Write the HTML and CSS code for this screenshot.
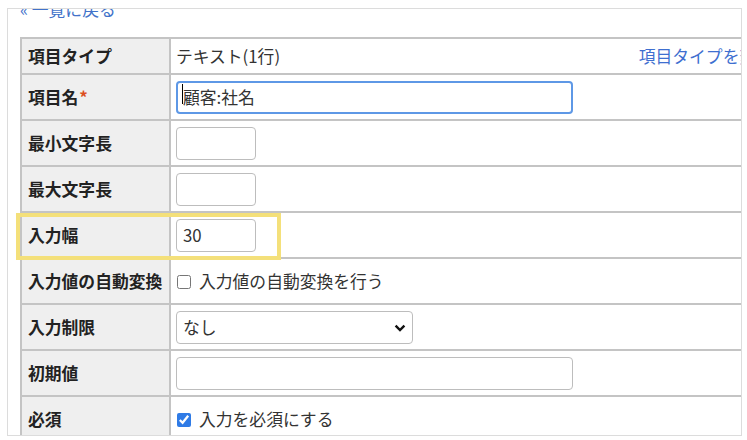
FILE: index.html
```html
<!DOCTYPE html>
<html lang="ja">
<head>
<meta charset="utf-8">
<title>項目編集</title>
<link rel="stylesheet" href="styles.css">
</head>
<body>
<div class="panel">
  <div class="content">
    <a class="back" href="#">« 一覧に戻る</a>
    <table class="form">
      <colgroup><col class="c-label"><col class="c-value"></colgroup>
      <tr class="row-first">
        <th>項目タイプ</th>
        <td><div class="type-line"><span>テキスト(1行)</span><a class="change" href="#">項目タイプを変更</a></div></td>
      </tr>
      <tr>
        <th>項目名<span class="req">*</span></th>
        <td><span class="field"><input class="inp wide focused" type="text" value="顧客:社名"><span class="caret"></span></span></td>
      </tr>
      <tr>
        <th>最小文字長</th>
        <td><input class="inp short" type="text" value=""></td>
      </tr>
      <tr>
        <th>最大文字長</th>
        <td><input class="inp short" type="text" value=""></td>
      </tr>
      <tr>
        <th>入力幅</th>
        <td><input class="inp short" type="text" value="30"></td>
      </tr>
      <tr>
        <th>入力値の自動変換</th>
        <td><label class="check"><input type="checkbox">入力値の自動変換を行う</label></td>
      </tr>
      <tr>
        <th>入力制限</th>
        <td>
          <span class="select-wrap">
            <select class="inp sel"><option>なし</option></select>
            <svg class="chev" width="12" height="8" viewBox="0 0 12 8"><path d="M1.6 1.6 L6 6 L10.4 1.6" fill="none" stroke="#111" stroke-width="2.4"/></svg>
          </span>
        </td>
      </tr>
      <tr>
        <th>初期値</th>
        <td><input class="inp wide" type="text" value=""></td>
      </tr>
      <tr>
        <th>必須</th>
        <td><label class="check"><input type="checkbox" checked>入力を必須にする</label></td>
      </tr>
    </table>
  </div>
  <div class="highlight"></div>
</div>
</body>
</html>
```

FILE: styles.css
```css
html, body {
  margin: 0;
  padding: 0;
  background: #fff;
}

body {
  padding: 8px 0 0 7px;
  font-family: "Noto Sans CJK JP", "Noto Sans", sans-serif;
  font-size: 16.8px;
  color: #333;
}

.panel {
  position: relative;
  width: 735px;
  height: 428px;
  box-sizing: border-box;
  border: 1px solid #dcdcdc;
  overflow: hidden;
  background: #fff;
}

.content {
  margin-top: -12px;
  padding: 0 12px;
}

.back {
  display: block;
  line-height: 24px;
  margin-bottom: 16px;
  color: #4272c9;
  text-decoration: none;
}

.form {
  border-collapse: collapse;
  table-layout: fixed;
  width: 760px;
}

.c-label { width: 149px; }

.form th,
.form td {
  border: 2px solid #c4c4c4;
  height: 44px;
  padding: 0 5px;
  vertical-align: middle;
  line-height: 24px;
}

.form th {
  background: #efefef;
  text-align: left;
  font-weight: bold;
  color: #222;
  padding-left: 6px;
  white-space: nowrap;
}

.form td {
  background: #fff;
}

.form .row-first th,
.form .row-first td {
  height: 34px;
}

.req {
  color: #dc4f1e;
  margin-left: 1px;
}

.type-line {
  display: flex;
  justify-content: space-between;
}

.change {
  color: #3f6fd0;
  text-decoration: none;
}

.field {
  position: relative;
  display: block;
  width: max-content;
}

.caret {
  position: absolute;
  left: 6px;
  top: 3px;
  width: 1px;
  height: 20px;
  background: #000;
}

.inp {
  display: block;
  box-sizing: border-box;
  height: 33px;
  margin: 0;
  border: 1px solid #bdbdbd;
  border-radius: 4px;
  padding: 0 6px;
  font: inherit;
  color: #333;
  background: #fff;
  outline: none;
}

.inp.short { width: 80px; }
.inp.wide { width: 397px; }

.inp.focused {
  border: 2px solid #5e98e6;
  padding: 0 5px;
}

.select-wrap {
  position: relative;
  display: block;
  width: max-content;
}

.inp.sel {
  width: 237px;
  -webkit-appearance: none;
  appearance: none;
}

.chev {
  position: absolute;
  right: 7px;
  top: 13px;
}

.check {
  display: flex;
  align-items: center;
  color: #333;
}

.check input {
  width: 14px;
  height: 14px;
  margin: 1px 8px 0 1px;
  accent-color: #2f7be6;
}

.highlight {
  position: absolute;
  left: 8px;
  top: 204px;
  width: 265px;
  height: 47px;
  box-sizing: border-box;
  border: 4px solid #f4e07a;
  pointer-events: none;
}
```
